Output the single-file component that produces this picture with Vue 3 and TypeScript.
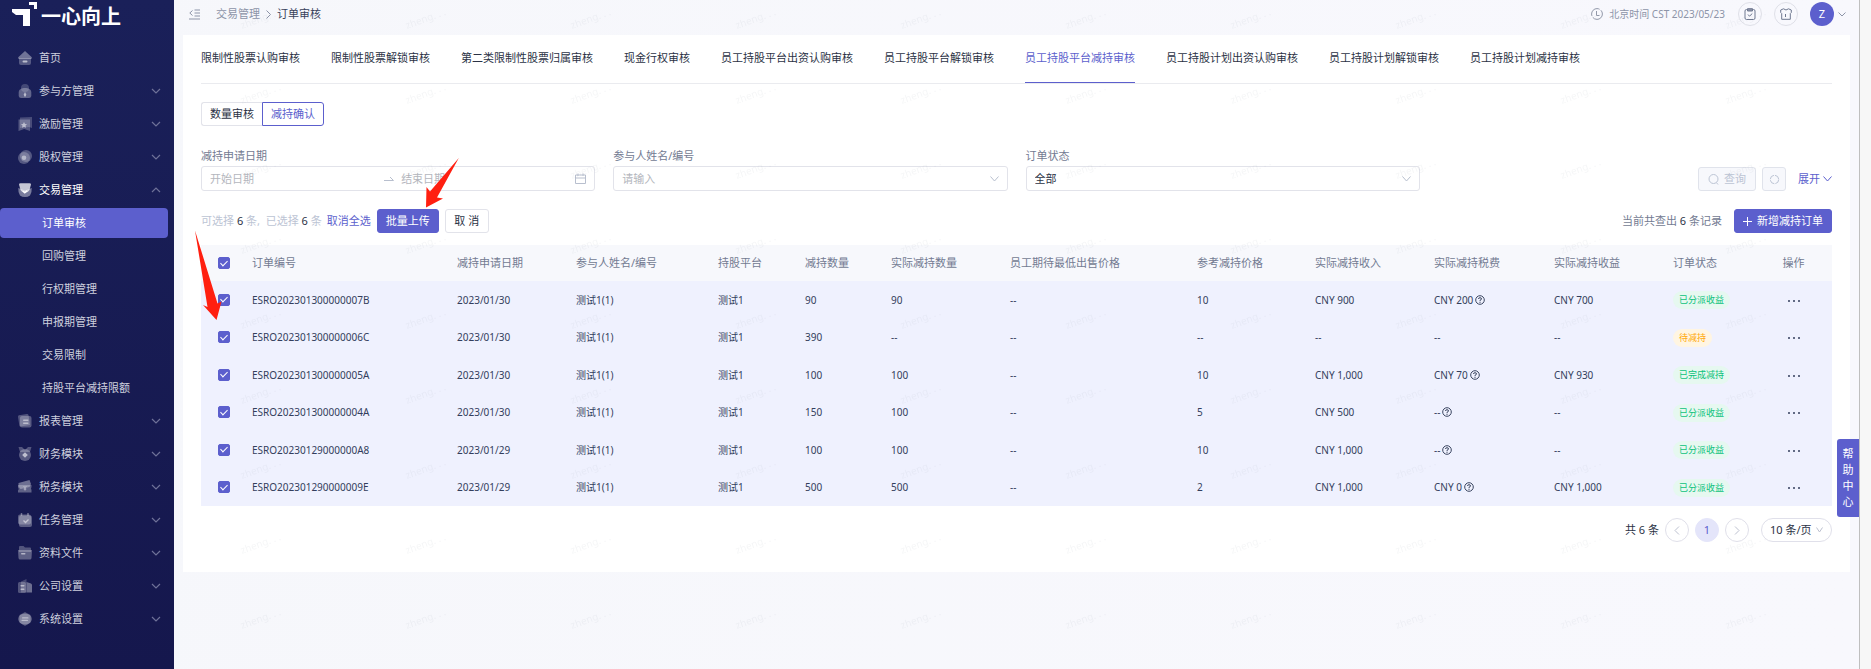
<script setup lang="ts">
import { computed, ref } from 'vue'

interface MenuItem {
  key: string
  label: string
  open?: boolean
  leaf?: boolean
  children?: string[]
}

interface Order {
  id: string
  date: string
  qty: string
  realQty: string
  price: string
  income: string
  tax: string
  taxHint: boolean
  profit: string
  status: string
  pending?: boolean
  checked: boolean
}

const menu: MenuItem[] = [
  { key: 'home', label: '首页', leaf: true },
  { key: 'party', label: '参与方管理' },
  { key: 'incentive', label: '激励管理' },
  { key: 'equity', label: '股权管理' },
  {
    key: 'trade',
    label: '交易管理',
    open: true,
    children: ['订单审核', '回购管理', '行权期管理', '申报期管理', '交易限制', '持股平台减持限额'],
  },
  { key: 'report', label: '报表管理' },
  { key: 'finance', label: '财务模块' },
  { key: 'tax', label: '税务模块' },
  { key: 'task', label: '任务管理' },
  { key: 'files', label: '资料文件' },
  { key: 'company', label: '公司设置' },
  { key: 'system', label: '系统设置' },
]
const activeChild = '订单审核'

const tabs = [
  '限制性股票认购审核',
  '限制性股票解锁审核',
  '第二类限制性股票归属审核',
  '现金行权审核',
  '员工持股平台出资认购审核',
  '员工持股平台解锁审核',
  '员工持股平台减持审核',
  '员工持股计划出资认购审核',
  '员工持股计划解锁审核',
  '员工持股计划减持审核',
]
const activeTab = ref(6)

const columns = [
  { title: '订单编号', width: 205 },
  { title: '减持申请日期', width: 119 },
  { title: '参与人姓名/编号', width: 142 },
  { title: '持股平台', width: 87 },
  { title: '减持数量', width: 86 },
  { title: '实际减持数量', width: 119 },
  { title: '员工期待最低出售价格', width: 187 },
  { title: '参考减持价格', width: 118 },
  { title: '实际减持收入', width: 119 },
  { title: '实际减持税费', width: 120 },
  { title: '实际减持收益', width: 119 },
  { title: '订单状态', width: 94 },
]

const orders = ref<Order[]>([
  { id: 'ESRO202301300000007B', date: '2023/01/30', qty: '90', realQty: '90', price: '10', income: 'CNY 900', tax: 'CNY 200', taxHint: true, profit: 'CNY 700', status: '已分派收益', checked: true },
  { id: 'ESRO202301300000006C', date: '2023/01/30', qty: '390', realQty: '--', price: '--', income: '--', tax: '--', taxHint: false, profit: '--', status: '待减持', pending: true, checked: true },
  { id: 'ESRO202301300000005A', date: '2023/01/30', qty: '100', realQty: '100', price: '10', income: 'CNY 1,000', tax: 'CNY 70', taxHint: true, profit: 'CNY 930', status: '已完成减持', checked: true },
  { id: 'ESRO202301300000004A', date: '2023/01/30', qty: '150', realQty: '100', price: '5', income: 'CNY 500', tax: '--', taxHint: true, profit: '--', status: '已分派收益', checked: true },
  { id: 'ESRO20230129000000A8', date: '2023/01/29', qty: '100', realQty: '100', price: '10', income: 'CNY 1,000', tax: '--', taxHint: true, profit: '--', status: '已分派收益', checked: true },
  { id: 'ESRO202301290000009E', date: '2023/01/29', qty: '500', realQty: '500', price: '2', income: 'CNY 1,000', tax: 'CNY 0', taxHint: true, profit: 'CNY 1,000', status: '已分派收益', checked: true },
])

const selectedCount = computed(() => orders.value.filter((o) => o.checked).length)
const allChecked = computed({
  get: () => orders.value.every((o) => o.checked),
  set: (v: boolean) => orders.value.forEach((o) => (o.checked = v)),
})
</script>

<template>
  <div class="shell">
    <aside class="side">
      <div class="brand">
        <svg class="brand-mark" width="26" height="26" viewBox="0 0 26 26" aria-hidden="true">
          <path d="M0 7H18V24H11V13H4L0 10Z" fill="#fff" />
          <path d="M17 0H25V7H22V3H17Z" fill="#fff" />
        </svg>
        <span class="brand-name">一心向上</span>
      </div>

      <nav class="menu">
        <template v-for="item in menu" :key="item.key">
          <a href="#" class="menu-item" :class="{ open: item.open }">
            <svg class="menu-icon" width="14" height="14" viewBox="0 0 14 14" fill="#fff" aria-hidden="true">
              <template v-if="item.key === 'home'">
                <path d="M7 0L13.500 6Q14.500 7.500 13 8H1Q-.5 7.500 .5 6Z" opacity=".5" />
                <path d="M1 7H13V12Q13 14 11 14H3Q1 14 1 12Z" opacity=".35" />
                <rect x="4.500" y="9.500" width="5" height="2" rx="1" opacity=".9" />
              </template>
              <template v-else-if="item.key === 'party'">
                <circle cx="7" cy="4" r="4" opacity=".25" />
                <path d="M.7 8.500C.7 5 4 4 7 4S13.300 5 13.300 8.500V12Q13 14 11 14H3Q1 14 .7 12Z" opacity=".42" />
                <path d="M7 8L8.200 10.500 7.700 12.500H6.300L5.800 10.500Z" opacity=".9" />
              </template>
              <template v-else-if="item.key === 'incentive'">
                <path d="M2 .5L14 0V11L11 10 2 11Z" opacity=".28" />
                <path d="M.5 2.500H12V14L6.200 12 .5 14Z" opacity=".35" />
                <path d="M6 5L7 6.900 9.100 7.200 7.500 8.600 8 10.700 6 9.700 4 10.700 4.500 8.600 2.900 7.200 5 6.900Z" opacity=".9" />
              </template>
              <template v-else-if="item.key === 'equity'">
                <circle cx="8" cy="6" r="6" opacity=".35" />
                <circle cx="6" cy="8" r="6" opacity=".35" />
                <circle cx="6" cy="7.700" r="2.300" opacity=".8" />
              </template>
              <template v-else-if="item.key === 'trade'">
                <path d="M1 1.500Q1 .3 2.500 .2H11.500Q13 .3 13 1.500L11.500 7Q10 9.800 7 9.800T2.500 7Z" opacity=".75" />
                <path d="M.3 5L7 7.500 13.700 5Q14 10 12 12.500 10 14 7 14T2 12.500Q0 10 .3 5Z" opacity=".42" />
                <path d="M5 8.300L6.800 9.800 9 7.800" fill="none" stroke="#fff" stroke-width="1.300" />
              </template>
              <template v-else-if="item.key === 'report'">
                <path d="M0 2.500Q0 1.500 1 1.300L9 0Q10.300 0 10.500 1L12 11 2.500 12.500Q1.500 12.500 1.300 11.500Z" opacity=".35" />
                <rect x="2" y="2" width="11.500" height="11.500" rx="2" opacity=".38" />
                <rect x="5" y="5.500" width="5.500" height="1.500" rx=".7" opacity=".85" />
                <rect x="5" y="8.500" width="5.500" height="1.500" rx=".7" opacity=".85" />
              </template>
              <template v-else-if="item.key === 'finance'">
                <path d="M.5 0H4L7 3 10 0H13.500L12 5H2Z" opacity=".35" />
                <circle cx="7" cy="8" r="6" opacity=".38" />
                <path d="M7 5.200L9.800 8 7 10.800 4.200 8Z" opacity=".95" />
              </template>
              <template v-else-if="item.key === 'tax'">
                <path d="M.5 3L11.500 0 13 4 11.500 7 2.500 9 .5 6.500Z" opacity=".5" />
                <path d="M0 5H13.500V7Q12.500 8.500 13.500 10V12.500H0V10.500Q1.500 9 0 7.500Z" opacity=".42" />
                <path d="M5.500 6L7 7.500 8.500 6M7 7.500V10.500M5.700 9H8.300" fill="none" stroke="#fff" opacity=".8" />
              </template>
              <template v-else-if="item.key === 'task'">
                <rect x="0" y="1.500" width="13" height="10" rx="2" opacity=".4" />
                <rect x="1" y="2.500" width="13" height="11.500" rx="2" opacity=".4" />
                <path d="M3.500 0V3M10 0V3" stroke="#fff" stroke-width="1.500" opacity=".5" />
                <path d="M5.500 7.500L7.500 9.500 10.500 6.500" fill="none" stroke="#fff" stroke-width="1.300" />
              </template>
              <template v-else-if="item.key === 'files'">
                <path d="M1 1Q1 0 2 0H5.500L7 1.500H12Q13 1.500 13 2.500V6H1Z" opacity=".35" />
                <path d="M0 4H14L13.500 12Q13.300 13.500 12 13.500H2Q.7 13.500 .5 12Z" opacity=".42" />
                <rect x="3" y="7" width="4.500" height="1.600" rx=".8" opacity=".85" />
              </template>
              <template v-else-if="item.key === 'company'">
                <path d="M3 2.500L8.500 0V13.500H3Z" opacity=".28" />
                <rect x="0" y="3" width="8" height="11" rx="1.500" opacity=".35" />
                <path d="M8.500 3L13 4.500Q14 5 14 6V13.500H8.500Z" opacity=".5" />
                <rect x="2.500" y="6" width="4" height="1.400" rx=".6" opacity=".85" />
                <rect x="2.500" y="9.500" width="4" height="1.400" rx=".6" opacity=".85" />
              </template>
              <template v-else>
                <path d="M7 0L12.500 3V10.500L7 14 1.500 10.500V3Z" opacity=".35" />
                <ellipse cx="7" cy="7" rx="6.800" ry="5.500" opacity=".45" />
                <rect x="4" y="5.200" width="6.500" height="1.300" rx=".6" opacity=".85" />
                <rect x="3.500" y="7.700" width="6.500" height="1.300" rx=".6" opacity=".85" />
              </template>
            </svg>
            <span>{{ item.label }}</span>
            <svg v-if="!item.leaf" class="menu-arrow" width="10" height="6" viewBox="0 0 10 6" aria-hidden="true">
              <path :d="item.open ? 'M1 5L5 1L9 5' : 'M1 1L5 5L9 1'" fill="none" stroke="currentColor" stroke-width="1.200" />
            </svg>
          </a>
          <a
            v-for="child in item.children ?? []"
            :key="child"
            href="#"
            class="menu-child"
            :class="{ active: child === activeChild }"
          ><span>{{ child }}</span></a>
        </template>
      </nav>
    </aside>

    <div class="main">
      <header class="top">
        <button class="plain fold" type="button" aria-label="收起菜单">
          <svg width="11" height="11" viewBox="0 0 11 11" fill="none" stroke="#8d94a8">
            <path d="M3.500 1.500L.8 4L3.500 6.500M5.500 1H11M5.500 4H11M5.500 7H11M0 10H11" />
          </svg>
        </button>
        <nav class="crumbs">
          <a href="#">交易管理</a>
          <svg width="5" height="9" viewBox="0 0 5 9" fill="none" stroke="#8d94a8" aria-hidden="true"><path d="M.5 .5L4.500 4.500L.5 8.500" /></svg>
          <span class="here">订单审核</span>
        </nav>
        <div class="clock">
          <svg width="12" height="12" viewBox="0 0 12 12" fill="none" stroke="#9298a9" aria-hidden="true">
            <circle cx="6" cy="6" r="5.400" stroke-dasharray="13 1.500" />
            <path d="M5.500 3V7.500H8.500" />
          </svg>
          <span>北京时间 CST 2023/05/23</span>
        </div>
        <button class="round" type="button" aria-label="待办">
          <svg width="12" height="12" viewBox="0 0 12 12" fill="none" stroke="#6f7890">
            <rect x="1" y="1.500" width="10" height="10" rx="1.500" />
            <path d="M3.500 .7H8.500V3H3.500Z" fill="#8d94a8" />
            <path d="M4 6.500L5.500 8.200L8.300 5.500" />
          </svg>
        </button>
        <button class="round" type="button" aria-label="主题">
          <svg width="12" height="12" viewBox="0 0 12 12" fill="none" stroke="#6f7890">
            <path d="M3.500 .8Q6 3.200 8.500 .8L11.300 2V4.500L10.300 5.500V11.300H1.700V5.500L.7 4.500V2ZM5.500 6V9" />
          </svg>
        </button>
        <button class="user" type="button" aria-label="账户">
          <span class="avatar">Z</span>
          <svg width="8" height="5" viewBox="0 0 8 5" fill="none" stroke="#8d94a8"><path d="M.5 .5L4 4L7.500 .5" /></svg>
        </button>
      </header>

      <main class="card">
        <div class="tabs" role="tablist">
          <button
            v-for="(tab, i) in tabs"
            :key="tab"
            type="button"
            role="tab"
            class="tab"
            :class="{ on: i === activeTab }"
            :aria-selected="i === activeTab"
            @click="activeTab = i"
          >{{ tab }}</button>
        </div>

        <div class="segment">
          <button type="button" class="seg">数量审核</button>
          <button type="button" class="seg on">减持确认</button>
        </div>

        <form class="filters" @submit.prevent>
          <div class="field">
            <label for="start">减持申请日期</label>
            <div class="box range">
              <input id="start" type="text" placeholder="开始日期" />
              <svg width="10" height="5" viewBox="0 0 10 5" fill="none" stroke="#b8bfce" aria-hidden="true"><path d="M0 4.500H9.500L6 1" /></svg>
              <input type="text" placeholder="结束日期" aria-label="结束日期" />
              <svg width="11" height="11" viewBox="0 0 11 11" fill="none" stroke="#b8bfce" aria-hidden="true">
                <path d="M.5 2H10.500V10.500H.5ZM.5 5H10.500M3 .5V3M8 .5V3" />
              </svg>
            </div>
          </div>
          <div class="field">
            <label for="person">参与人姓名/编号</label>
            <div class="box">
              <input id="person" type="text" placeholder="请输入" />
              <svg width="9" height="6" viewBox="0 0 9 6" fill="none" stroke="#b8bfce" aria-hidden="true"><path d="M.5 .5L4.500 5L8.500 .5" /></svg>
            </div>
          </div>
          <div class="field">
            <label for="status">订单状态</label>
            <div class="box">
              <select id="status"><option>全部</option></select>
              <svg width="9" height="6" viewBox="0 0 9 6" fill="none" stroke="#b8bfce" aria-hidden="true"><path d="M.5 .5L4.500 5L8.500 .5" /></svg>
            </div>
          </div>
          <div class="actions">
            <button type="button" class="btn muted query">
              <svg width="11" height="11" viewBox="0 0 11 11" fill="none" stroke="#bcc4d4" aria-hidden="true"><circle cx="5.500" cy="5" r="4.500" /><path d="M8.300 8.500L10 10.500" /></svg>
              查询
            </button>
            <button type="button" class="btn muted reset" aria-label="重置">
              <svg width="11" height="11" viewBox="0 0 11 11" fill="none" stroke="#bcc4d4"><circle cx="5.500" cy="5.500" r="4.200" stroke-dasharray="5.500 1.100" /></svg>
            </button>
            <button type="button" class="plain expand">
              展开
              <svg width="9" height="6" viewBox="0 0 9 6" fill="none" stroke="#5c5fcd" aria-hidden="true"><path d="M.5 .5L4.500 5L8.500 .5" /></svg>
            </button>
          </div>
        </form>

        <div class="toolbar">
          <span class="pick">可选择 <b>{{ orders.length }}</b> 条, &nbsp;已选择 <b>{{ selectedCount }}</b> 条</span>
          <button type="button" class="plain link" @click="allChecked = false">取消全选</button>
          <button type="button" class="btn primary upload">批量上传</button>
          <button type="button" class="btn cancel">取 消</button>
          <span class="total">当前共查出 <b>{{ orders.length }}</b> 条记录</span>
          <button type="button" class="btn primary create">
            <svg width="9" height="9" viewBox="0 0 9 9" fill="none" stroke="#fff" aria-hidden="true"><path d="M4.500 0V9M0 4.500H9" /></svg>
            新增减持订单
          </button>
        </div>

        <table class="orders">
          <colgroup>
            <col class="c-check" />
            <col v-for="c in columns" :key="c.title" :style="{ width: c.width + 'px' }" />
            <col class="c-ops" />
          </colgroup>
          <thead>
            <tr>
              <th class="check"><input v-model="allChecked" type="checkbox" aria-label="全选" /></th>
              <th v-for="c in columns" :key="c.title">{{ c.title }}</th>
              <th class="ops">操作</th>
            </tr>
          </thead>
          <tbody>
            <tr v-for="o in orders" :key="o.id">
              <td class="check"><input v-model="o.checked" type="checkbox" :aria-label="o.id" /></td>
              <td>{{ o.id }}</td>
              <td>{{ o.date }}</td>
              <td>测试1(1)</td>
              <td>测试1</td>
              <td>{{ o.qty }}</td>
              <td>{{ o.realQty }}</td>
              <td>--</td>
              <td>{{ o.price }}</td>
              <td>{{ o.income }}</td>
              <td>
                <span class="tax">
                  <span>{{ o.tax }}</span>
                  <svg v-if="o.taxHint" width="10" height="10" viewBox="0 0 10 10" fill="none" stroke="#3a4560" aria-hidden="true">
                    <circle cx="5" cy="5" r="4.300" />
                    <path d="M3.500 4Q3.500 2.700 5 2.700T6.500 4Q6.500 4.700 5 5.300V6.200M5 6.900V7.900" />
                  </svg>
                </span>
              </td>
              <td>{{ o.profit }}</td>
              <td><span class="tag" :class="{ warn: o.pending }">{{ o.status }}</span></td>
              <td class="ops">
                <button type="button" class="plain more" aria-label="更多">
                  <svg width="12" height="2" viewBox="0 0 12 2" fill="#333e5c"><circle cx="1" cy="1" r="1" /><circle cx="6" cy="1" r="1" /><circle cx="11" cy="1" r="1" /></svg>
                </button>
              </td>
            </tr>
          </tbody>
        </table>

        <nav class="pager" aria-label="分页">
          <span>共 {{ orders.length }} 条</span>
          <button type="button" class="page" aria-label="上一页">
            <svg width="6" height="9" viewBox="0 0 6 9" fill="none" stroke="#bcc0cf"><path d="M5 .5L1 4.500L5 8.500" /></svg>
          </button>
          <button type="button" class="page on">1</button>
          <button type="button" class="page" aria-label="下一页">
            <svg width="6" height="9" viewBox="0 0 6 9" fill="none" stroke="#bcc0cf"><path d="M1 .5L5 4.500L1 8.500" /></svg>
          </button>
          <div class="size">
            <select aria-label="每页条数"><option>10 条/页</option></select>
            <svg width="7" height="6" viewBox="0 0 7 6" fill="none" stroke="#bcc0cf" aria-hidden="true"><path d="M.5 .5L3.500 5L6.500 .5" /></svg>
          </div>
        </nav>
      </main>

      <svg class="watermark" aria-hidden="true">
        <defs>
          <pattern id="wm" width="165" height="75" patternUnits="userSpaceOnUse">
            <text x="68" y="29" transform="rotate(-20 68 29)" font-size="10" fill="#5a6478" fill-opacity=".06">zheng. . .</text>
          </pattern>
        </defs>
        <rect width="100%" height="100%" fill="url(#wm)" />
      </svg>

      <button type="button" class="help">帮助中心</button>
    </div>

    <svg class="arrows" width="480" height="330" viewBox="0 0 480 330" fill="#ff1f10" aria-hidden="true">
      <path d="M195 230.500L217.500 303.500L221.500 301.500L216.500 320L203 305L207.500 307Z" />
      <path d="M458.800 158L437 197.500L443 198.500L426 207.500L426.500 187L430 191.500Z" />
    </svg>
  </div>
</template>

<style>
html,
body {
  margin: 0;
  background: #f7f7f7;
}
</style>

<style scoped>
.shell,
.shell *,
.shell *::after {
  box-sizing: border-box;
}
.shell {
  position: relative;
  display: flex;
  min-height: 100vh;
  margin-right: 11px;
  border-right: 1px solid #bfbfbf;
  background: linear-gradient(90deg, #f6f7fb, #f8f8fd);
  color: #2b3245;
  font-family: "Noto Sans", "Noto Sans CJK SC", sans-serif;
  font-size: 11px;
  line-height: 18px;
}
button,
input,
select {
  margin: 0;
  padding: 0;
  border: 0;
  background: none;
  color: inherit;
  font: inherit;
  white-space: nowrap;
}
button {
  cursor: pointer;
}
a {
  color: inherit;
  text-decoration: none;
}
svg {
  display: block;
  flex: none;
}
b {
  color: #2b3245;
  font-weight: 400;
}

/* sidebar */
.side {
  flex: none;
  width: 174px;
  background: linear-gradient(#1a2059, #15174d);
  color: #ced0de;
}
.brand {
  display: flex;
  height: 41px;
  padding: 2px 0 0 12px;
  gap: 3px;
}
.brand-name {
  color: #fff;
  font-family: "Noto Sans CJK SC", sans-serif;
  font-size: 20px;
  font-weight: 700;
  line-height: 28px;
}
.menu-item,
.menu-child {
  display: flex;
  align-items: center;
  height: 33px;
}
.menu-item {
  padding: 0 13px 0 18px;
  gap: 7px;
}
.menu-item.open {
  color: #fff;
}
.menu-icon {
  opacity: .75;
}
.menu-item.open .menu-icon {
  opacity: 1;
}
.menu-arrow {
  margin-left: auto;
  color: #6e7198;
}
.menu-child {
  padding-right: 6px;
}
.menu-child span {
  flex: 1;
  height: 30px;
  padding-left: 42px;
  line-height: 30px;
  border-radius: 4px;
}
.menu-child.active span {
  background: #5c5fcd;
  color: #fff;
}

/* header */
.main {
  position: relative;
  flex: 1;
  min-width: 0;
  padding: 0 9px;
}
.top {
  display: flex;
  align-items: center;
  height: 35px;
  padding: 0 4px 7px 6px;
}
.crumbs {
  display: flex;
  align-items: center;
  gap: 6px;
  margin-left: 16px;
  color: #8d94a8;
}
.here {
  color: #39425c;
}
.clock {
  display: flex;
  align-items: center;
  gap: 6px;
  margin-left: auto;
  margin-right: 13px;
  color: #8d94a8;
  font-size: 10px;
}
.round {
  display: grid;
  place-items: center;
  width: 24px;
  height: 24px;
  margin-right: 12px;
  border: 1px solid #dfe0e8;
  border-radius: 50%;
}
.user {
  display: flex;
  align-items: center;
  gap: 4px;
}
.avatar {
  width: 24px;
  height: 24px;
  border-radius: 50%;
  background: #5c5fcd;
  color: #fff;
  line-height: 24px;
  text-align: center;
}

/* card */
.card {
  padding: 0 18px 30px;
  background: #fff;
}
.tabs {
  display: flex;
  gap: 31px;
  border-bottom: 1px solid #eaebef;
}
.tab {
  height: 48px;
  padding-bottom: 1px;
  border-bottom: 1px solid transparent;
}
.tab.on {
  border-color: #5c5fcd;
  color: #5c5fcd;
}
.segment {
  display: flex;
  margin-top: 18px;
}
.seg {
  width: 61px;
  height: 24px;
  border: 1px solid #e2e3ea;
  border-right: 0;
  border-radius: 3px 0 0 3px;
}
.seg.on {
  width: 62px;
  border: 1px solid #5c5fcd;
  border-radius: 0 3px 3px 0;
  color: #5c5fcd;
}
.filters {
  display: grid;
  grid-template-columns: repeat(4, 1fr);
  gap: 18px;
  align-items: end;
  margin-top: 21px;
}
.field label {
  display: block;
  margin-bottom: 1px;
  color: #737b92;
}
.box {
  display: flex;
  align-items: center;
  gap: 7px;
  height: 25px;
  padding: 0 8px;
  border: 1px solid #e2e3ea;
  border-radius: 3px;
}
.box input,
.box select {
  flex: 1;
  min-width: 0;
  height: 23px;
  outline: none;
}
select {
  appearance: none;
}
.box input::placeholder {
  color: #b4b6bd;
  opacity: 1;
}
.actions {
  display: flex;
  justify-content: flex-end;
  gap: 6px;
}
.btn {
  display: flex;
  align-items: center;
  justify-content: center;
  gap: 5px;
  height: 24px;
  border: 1px solid #e2e3ea;
  border-radius: 3px;
}
.btn.muted {
  border-color: #e0e3eb;
  background: #f7f8fc;
  color: #bcc4d4;
}
.query {
  width: 58px;
}
.reset {
  width: 24px;
}
.btn.primary {
  border-color: #5c5fcd;
  background: #5c5fcd;
  color: #fff;
}
.expand {
  display: flex;
  align-items: center;
  gap: 3px;
  margin-left: 6px;
  color: #5c5fcd;
}
.toolbar {
  display: flex;
  align-items: center;
  margin-top: 18px;
}
.pick {
  color: #bcc4d4;
}
.link {
  margin-left: 5px;
  color: #5c5fcd;
}
.upload {
  width: 62px;
  margin-left: 6px;
}
.cancel {
  width: 44px;
  margin-left: 6px;
}
.total {
  margin-left: auto;
  margin-right: 12px;
  color: #737b92;
}
.create {
  width: 98px;
}

/* table */
.orders {
  width: 100%;
  margin-top: 12px;
  border-collapse: collapse;
  table-layout: fixed;
}
.c-check {
  width: 39px;
}
.c-ops {
  width: 77px;
}
.orders th,
.orders td {
  padding: 0 0 0 12px;
  text-align: left;
  white-space: nowrap;
}
.orders th {
  height: 36px;
  background: #f7f8fc;
  color: #737b92;
  font-weight: 400;
}
.orders td {
  height: 37px;
  background: #eff1fe;
  color: #333e5c;
  font-size: 10px;
}
.orders tr:nth-child(even) td {
  height: 38px;
}
.orders .check {
  padding-left: 17px;
}
.orders .ops {
  padding: 0;
  text-align: center;
}
.check input {
  display: grid;
  place-items: center;
  width: 12px;
  height: 12px;
  appearance: none;
  border: 1px solid #c9ccda;
  border-radius: 2px;
  background: #fff;
}
.check input:checked {
  border-color: #5c5fcd;
  background: #5c5fcd;
}
.check input:checked::after {
  content: "";
  width: 4px;
  height: 7px;
  margin-bottom: 2px;
  border: solid #fff;
  border-width: 0 1px 1px 0;
  transform: rotate(45deg);
}
.tax {
  display: flex;
  align-items: center;
  gap: 2px;
}
.tag {
  display: inline-block;
  height: 18px;
  padding: 0 6px;
  border-radius: 9px;
  background: #e6f8f0;
  color: #0bc27a;
  font-size: 9px;
  line-height: 18px;
  vertical-align: middle;
}
.tag.warn {
  background: #fff5e2;
  color: #ffa90a;
}
.more {
  padding: 6px;
  vertical-align: middle;
}

/* pagination */
.pager {
  display: flex;
  align-items: center;
  justify-content: flex-end;
  gap: 6px;
  margin-top: 12px;
}
.page {
  display: grid;
  place-items: center;
  width: 24px;
  height: 24px;
  border: 1px solid #e0e0ea;
  border-radius: 50%;
}
.page.on {
  border-color: #e4e5fa;
  background: #e4e5fa;
  color: #5c5fcd;
}
.size {
  display: flex;
  align-items: center;
  width: 71px;
  height: 24px;
  margin-left: 6px;
  padding: 0 8px;
  border: 1px solid #e0e0ea;
  border-radius: 12px;
}
.size select {
  flex: 1;
  min-width: 0;
}

/* overlays */
.watermark {
  position: absolute;
  inset: 0;
  width: 100%;
  height: 100%;
  pointer-events: none;
}
.help {
  position: absolute;
  top: 439px;
  right: 0;
  width: 22px;
  padding: 7px 5px;
  border-radius: 3px 0 0 3px;
  background: #5c5fcd;
  color: #fff;
  font-size: 11px;
  line-height: 16px;
  white-space: normal;
}
.arrows {
  position: absolute;
  top: 0;
  left: 0;
  pointer-events: none;
}
</style>
